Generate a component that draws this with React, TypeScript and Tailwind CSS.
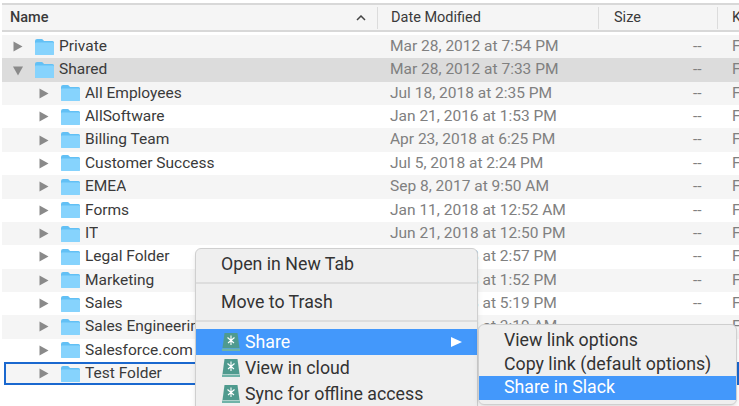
const rows = [
  { name: "Private", date: "Mar 28, 2012 at 7:54 PM", depth: 0 },
  { name: "Shared", date: "Mar 28, 2012 at 7:33 PM", depth: 0, open: true },
  { name: "All Employees", date: "Jul 18, 2018 at 2:35 PM", depth: 1 },
  { name: "AllSoftware", date: "Jan 21, 2016 at 1:53 PM", depth: 1 },
  { name: "Billing Team", date: "Apr 23, 2018 at 6:25 PM", depth: 1 },
  { name: "Customer Success", date: "Jul 5, 2018 at 2:24 PM", depth: 1 },
  { name: "EMEA", date: "Sep 8, 2017 at 9:50 AM", depth: 1 },
  { name: "Forms", date: "Jan 11, 2018 at 12:52 AM", depth: 1 },
  { name: "IT", date: "Jun 21, 2018 at 12:50 PM", depth: 1 },
  { name: "Legal Folder", date: "Jun 21, 2018 at 2:57 PM", depth: 1 },
  { name: "Marketing", date: "Jun 21, 2018 at 1:52 PM", depth: 1 },
  { name: "Sales", date: "Jun 21, 2018 at 5:19 PM", depth: 1 },
  { name: "Sales Engineering", date: "Jun 21, 2018 at 3:19 AM", depth: 1 },
  // the menus cover the other columns of these two rows
  { name: "Salesforce.com", depth: 1 },
  { name: "Test Folder", depth: 1, selected: true },
];

function Folder() {
  return (
    <svg width="19" height="16" viewBox="0 0 19 16" className="shrink-0">
      <path d="M0 2 Q0 0 2 0 H6.5 Q7.5 0 8.2 1 L9 2 H17.5 Q19 2 19 3.5 V14.5 Q19 16 17.5 16 H1.5 Q0 16 0 14.5 Z" fill="#62c0f5" />
      <path d="M0 4.5 Q0 3.5 1 3.5 H18 Q19 3.5 19 4.5 V14.5 Q19 16 17.5 16 H1.5 Q0 16 0 14.5 Z" fill="#86d3fd" />
    </svg>
  );
}

function Disclosure({ open }: { open?: boolean }) {
  return (
    <svg width="10" height="11" viewBox="0 0 10 11" className="shrink-0">
      {open ? <path d="M0 1.5 H10 L5 10.5 Z" fill="#8a8a8a" /> : <path d="M0.5 0.5 L9.5 5.5 L0.5 10.5 Z" fill="#8a8a8a" />}
    </svg>
  );
}

function DriveIcon() {
  return (
    <svg width="20" height="20" viewBox="0 0 20 20" className="shrink-0">
      <path d="M3.5 1 H16.5 L18.5 16 H1.5 Z" fill="#4f9a8e" />
      <rect x="1" y="16.5" width="18" height="2.5" fill="#6fb3a8" />
      <path d="M10 3.5 V13 M10 8.5 L6.5 5.5 M10 8.5 L13.5 5.5 M10 8.5 L7 11 M10 8.5 L13 11" stroke="#ffffff" strokeWidth="1.1" fill="none" />
    </svg>
  );
}

export default function App() {
  return (
    <div className="relative h-[406px] w-[739px] overflow-hidden bg-white pl-[2px] pt-[3px] font-['Roboto',sans-serif] text-[15.5px] text-[#3a3a3a]">
      <div className="flex h-[29px] items-center whitespace-nowrap border-y-2 border-[#d8d8d8] bg-[#f5f5f5] text-[14.5px]">
        <div className="flex h-[22px] w-[376px] shrink-0 items-center justify-between border-r border-[#dcdcdc] pl-2 pr-[11px]">
          <span className="font-medium">Name</span>
          <svg width="10" height="6" viewBox="0 0 10 6"><path d="M1 5 L5 1 L9 5" stroke="#444444" strokeWidth="1.5" fill="none" /></svg>
        </div>
        <div className="flex h-[22px] w-[221px] shrink-0 items-center border-r border-[#dcdcdc] pl-[13px]">Date Modified</div>
        <div className="flex h-[22px] w-[119px] shrink-0 items-center border-r border-[#dcdcdc] pl-[15px]">Size</div>
        <div className="shrink-0 pl-[14px]">Kind</div>
      </div>
      <div className="pt-[3px]">
        {rows.map((row, i) => (
          <div
            key={row.name}
            className={`flex h-[23.36px] items-center whitespace-nowrap ${row.open ? "bg-[#dcdcdc]" : i % 2 === 0 ? "bg-[#f5f5f5]" : "bg-white"} ${row.selected ? "ml-[2px] border-2 border-[#1a68cf]" : ""}`}
          >
            <div className={`flex w-[386px] shrink-0 items-center ${row.selected ? "pl-[33px]" : row.depth === 1 ? "pl-[37px]" : "pl-[11px]"}`}>
              <Disclosure open={row.open} />
              <span className="ml-[12px] flex"><Folder /></span>
              <span className="ml-[5px] truncate">{row.name}</span>
            </div>
            {row.date && (
              <>
                <div className="w-[305px] shrink-0 pl-[2px] text-[#808080]">{row.date}</div>
                <div className="w-[39px] shrink-0 text-[#808080]">--</div>
                <div className="text-[#808080]">F</div>
              </>
            )}
          </div>
        ))}
      </div>

      <div className="absolute left-[195px] top-[248px] flex h-[170px] w-[283px] flex-col rounded-md border border-[#cfcfcf] bg-[#efefef] pt-[3px] text-[17.75px] text-[#333333] shadow-md">
        <div className="flex h-[25px] items-center pl-[25px]">Open in New Tab</div>
        <div className="my-[5px] h-[2px] bg-[#dddddd]" />
        <div className="flex h-[26px] items-center pl-[25px]">Move to Trash</div>
        <div className="mb-[7px] mt-[5px] h-[2px] bg-[#dddddd]" />
        <div className="flex h-[26px] items-center justify-between bg-[#4398fb] pl-[25px] pr-[14px] text-white">
          <span className="flex items-center gap-[4px]"><DriveIcon />Share</span>
          <svg width="13" height="12" viewBox="0 0 13 12"><path d="M1 1 L12 6 L1 11 Z" fill="#ffffff" /></svg>
        </div>
        <div className="flex h-[26px] items-center gap-[4px] pl-[25px]"><DriveIcon />View in cloud</div>
        <div className="flex h-[26px] items-center gap-[4px] pl-[25px]"><DriveIcon />Sync for offline access</div>
      </div>

      <div className="absolute left-[478px] top-[324px] flex w-[259px] flex-col rounded-md border border-[#cfcfcf] bg-[#efefef] py-[4px] text-[17.75px] text-[#333333] shadow-md">
        <div className="flex h-[23.5px] items-center pl-[25px]">View link options</div>
        <div className="flex h-[23.5px] items-center pl-[25px]">Copy link (default options)</div>
        <div className="flex h-[23.5px] items-center bg-[#4398fb] pl-[25px] text-white">Share in Slack</div>
      </div>
    </div>
  );
}
